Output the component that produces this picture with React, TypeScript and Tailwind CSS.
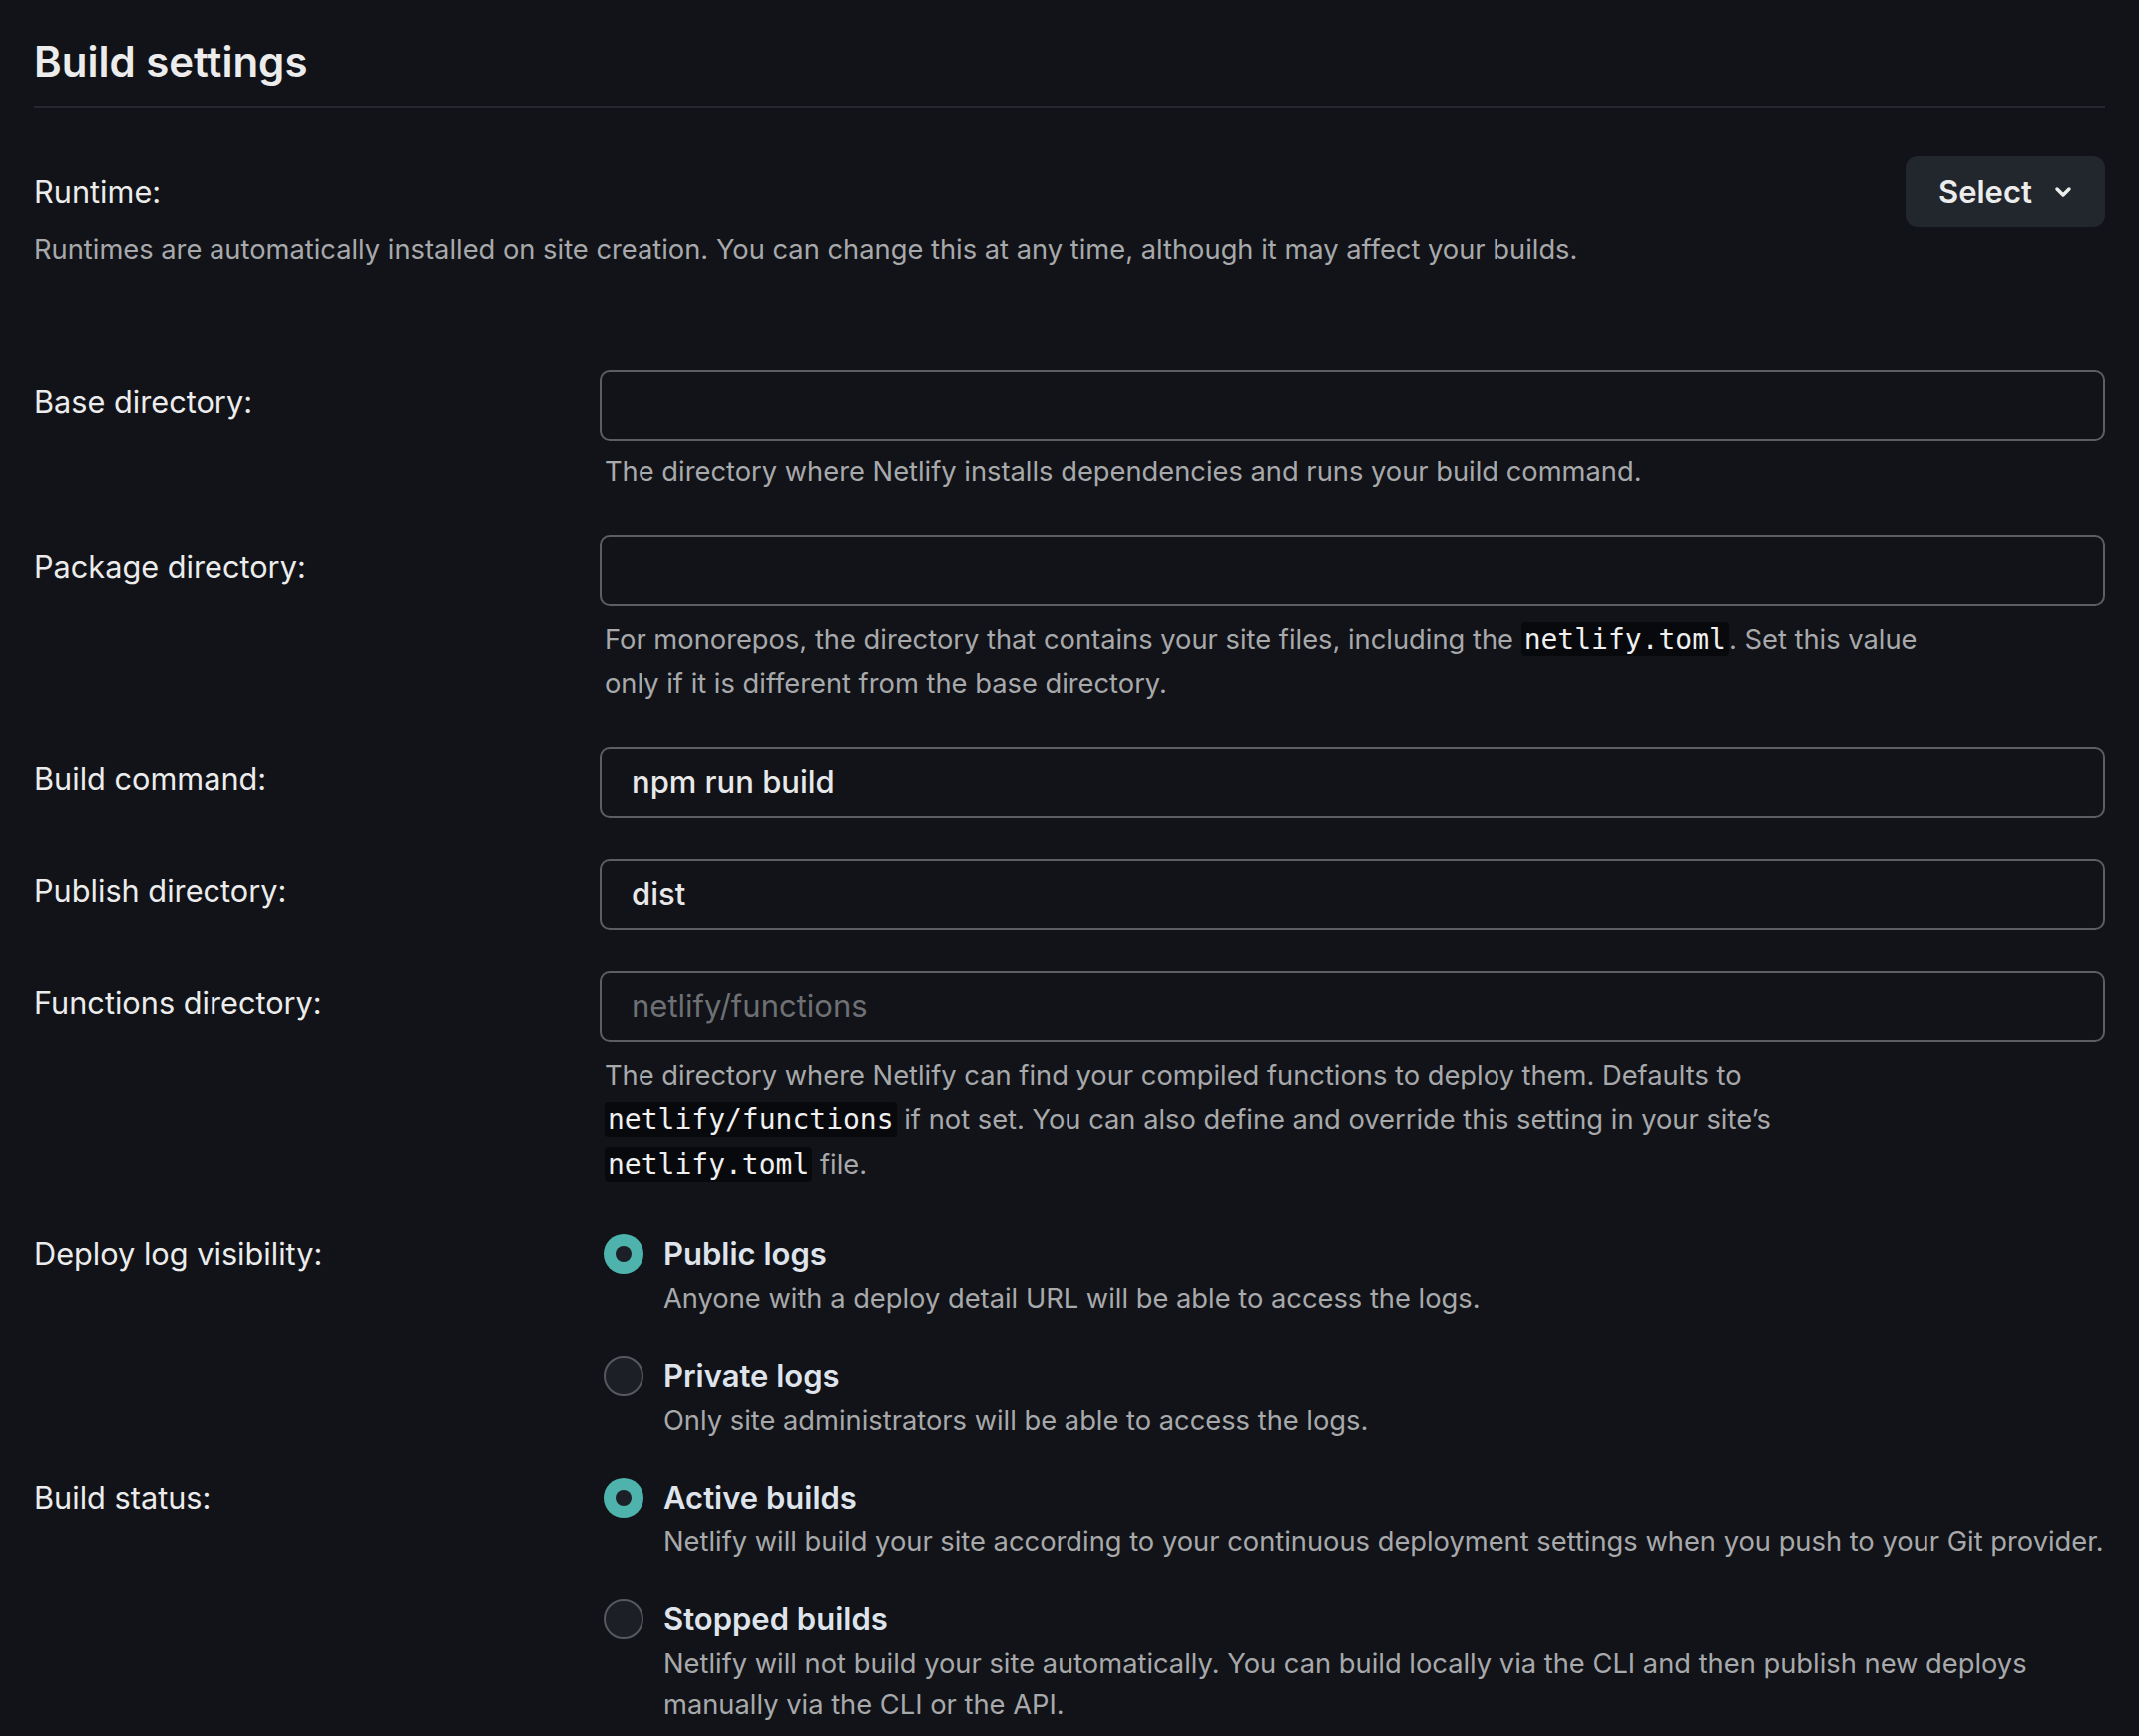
import React from "react";

const Code: React.FC<{ children: React.ReactNode }> = ({ children }) => (
  <code className="rounded-[4px] bg-[#07090c] px-[3px] py-[1px] font-['DejaVu_Sans_Mono',monospace] text-[28px] text-[#f0f0f0]">
    {children}
  </code>
);

interface FieldProps {
  label: string;
  value?: string;
  placeholder?: string;
  help?: React.ReactNode;
}

const Field: React.FC<FieldProps> = ({ label, value, placeholder, help }) => (
  <div className="mt-[41px] flex first:mt-[99px]">
    <div className="w-[567px] shrink-0 text-[30.7px] leading-[64px] text-[#ececec]">
      {label}
    </div>
    <div className="flex-1">
      <div className="flex h-[71px] items-center rounded-[10px] border-2 border-[#5b5e63] pl-[30px] text-[31px]">
        {value ? (
          <span className="font-medium text-[#e8e8e8]">{value}</span>
        ) : placeholder ? (
          <span className="text-[#6e7074]">{placeholder}</span>
        ) : null}
      </div>
      {help && (
        // help with inline code sits a few pixels lower
        <p
          className={`${typeof help === "string" ? "mt-[8px]" : "mt-[11px]"} max-w-[1340px] pl-[5px] text-[27.3px] leading-[45px] text-[#a8a9ab]`}
        >
          {help}
        </p>
      )}
    </div>
  </div>
);

interface OptionProps {
  title: string;
  desc: string;
  checked?: boolean;
}

const RadioOption: React.FC<OptionProps> = ({ title, desc, checked }) => (
  <div className="flex items-start">
    <div className="ml-[4px] mt-[4px] shrink-0">
      {checked ? (
        <div className="flex size-[40px] items-center justify-center rounded-full bg-[#4fb3ad]">
          <div className="size-[16px] rounded-full bg-[#1c1f25]" />
        </div>
      ) : (
        <div className="size-[40px] rounded-full border-2 border-[#55585d] bg-[#1c1f25]" />
      )}
    </div>
    <div className="ml-[20px] flex-1">
      <div className="text-[31px] font-semibold leading-[48px] text-[#dfe4ec]">
        {title}
      </div>
      <div className="text-[27.3px] leading-[41px] text-[#a8a9ab]">{desc}</div>
    </div>
  </div>
);

const RadioField: React.FC<{ label: string; options: OptionProps[]; first?: boolean }> = ({
  label,
  options,
  first,
}) => (
  <div className={`flex ${first ? "mt-[43px]" : "mt-[33px]"}`}>
    <div className="w-[567px] shrink-0 text-[30.7px] leading-[48px] text-[#ececec]">
      {label}
    </div>
    <div className="flex flex-1 flex-col gap-[33px]">
      {options.map((o) => (
        <RadioOption key={o.title} {...o} />
      ))}
    </div>
  </div>
);

export default function App() {
  return (
    <div className="min-h-screen bg-[#111318] px-[34px] pb-[40px] pt-[37px] font-['Inter',sans-serif]">
      <h2 className="text-[42px] font-semibold leading-[50px] text-[#ececec]">
        Build settings
      </h2>
      <div className="mt-[19px] border-b-2 border-[#25282e]" />

      <div className="mt-[48px] flex items-start justify-between">
        <div className="pt-[14px]">
          <div className="text-[30.7px] leading-[44px] text-[#ececec]">Runtime:</div>
          <p className="mt-[16px] text-[27.3px] leading-[42px] text-[#a8a9ab]">
            Runtimes are automatically installed on site creation. You can change this at any
            time, although it may affect your builds.
          </p>
        </div>
        <button className="flex h-[72px] w-[200px] items-center rounded-[12px] bg-[#22262d] pl-[33px] text-[31px] font-semibold text-[#ececec]">
          Select
          <svg
            className="ml-[22px]"
            width="18"
            height="12"
            viewBox="0 0 18 12"
            fill="none"
            stroke="#ececec"
            strokeWidth="3.5"
            strokeLinecap="round"
            strokeLinejoin="round"
          >
            <path d="M3 3l6 6 6-6" />
          </svg>
        </button>
      </div>

      <div>
        <Field
          label="Base directory:"
          help="The directory where Netlify installs dependencies and runs your build command."
        />
        <Field
          label="Package directory:"
          help={
            <>
              For monorepos, the directory that contains your site files, including the{" "}
              <Code>netlify.toml</Code>. Set this value only if it is different from the base
              directory.
            </>
          }
        />
        <Field label="Build command:" value="npm run build" />
        <Field label="Publish directory:" value="dist" />
        <Field
          label="Functions directory:"
          placeholder="netlify/functions"
          help={
            <>
              The directory where Netlify can find your compiled functions to deploy them.
              Defaults to <Code>netlify/functions</Code> if not set. You can also define and
              override this setting in your site’s <Code>netlify.toml</Code> file.
            </>
          }
        />
      </div>

      <RadioField
        first
        label="Deploy log visibility:"
        options={[
          {
            title: "Public logs",
            desc: "Anyone with a deploy detail URL will be able to access the logs.",
            checked: true,
          },
          {
            title: "Private logs",
            desc: "Only site administrators will be able to access the logs.",
          },
        ]}
      />
      <RadioField
        label="Build status:"
        options={[
          {
            title: "Active builds",
            desc: "Netlify will build your site according to your continuous deployment settings when you push to your Git provider.",
            checked: true,
          },
          {
            title: "Stopped builds",
            desc: "Netlify will not build your site automatically. You can build locally via the CLI and then publish new deploys manually via the CLI or the API.",
          },
        ]}
      />
    </div>
  );
}
